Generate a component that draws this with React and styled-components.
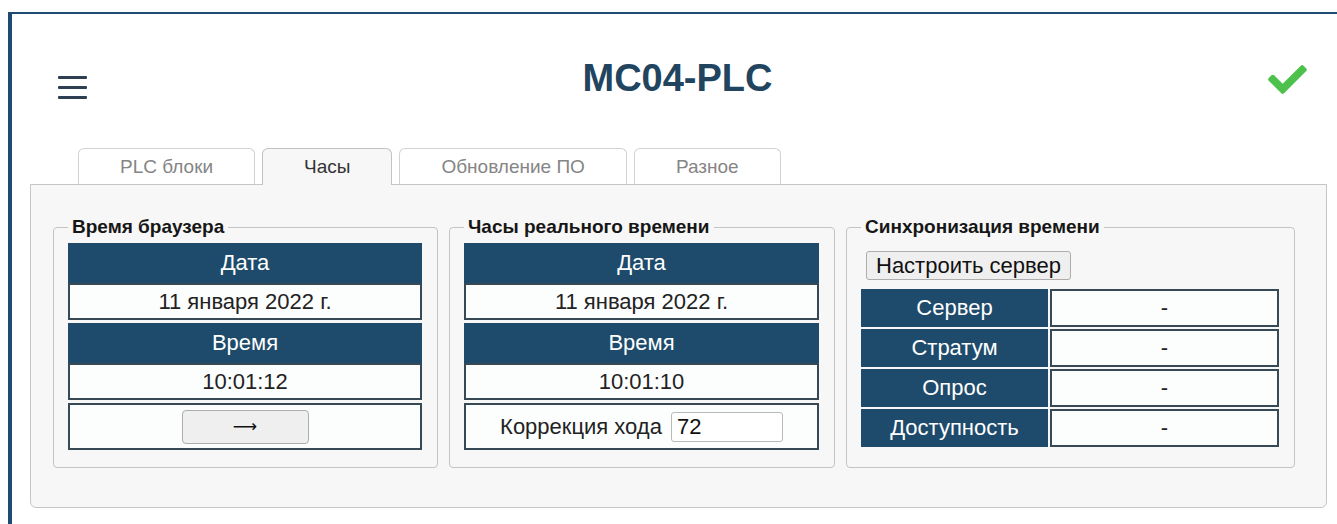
import React from "react";
import styled, { createGlobalStyle } from "styled-components";

const GlobalStyle = createGlobalStyle`
  html, body { margin: 0; padding: 0; background: #ffffff; }
  body { font-family: "Liberation Sans", Arial, sans-serif; color: #222; }
  * { box-sizing: border-box; }
`;

const Page = styled.div`
  height: 524px;
  padding: 12px 0 0 8px;
  overflow: hidden;
`;

const Frame = styled.div`
  height: 100%;
  border-top: 2px solid #1f4b72;
  border-left: 4px solid #1f4b72;
  background: #ffffff;
`;

const Header = styled.header`
  height: 134px;
  padding: 42px 30px 0 46px;
  display: flex;
  align-items: flex-start;
  justify-content: space-between;
`;

const Burger = styled.button`
  margin-top: 20px;
  width: 29px;
  padding: 0;
  border: 0;
  background: none;
  display: flex;
  flex-direction: column;
  gap: 7px;
  cursor: pointer;
`;

const BurgerBar = styled.span`
  display: block;
  height: 3px;
  border-radius: 1px;
  background: #2d3f50;
`;

const Title = styled.h1`
  margin: 0;
  font-size: 38px;
  line-height: 44px;
  font-weight: bold;
  color: #21445f;
`;

const StatusIcon = styled.svg`
  margin-top: 9px;
  width: 39px;
  height: 29px;
  fill: #4cc14c;
`;

const Body = styled.div`
  margin: 0 10px 0 18px;
`;

const TabBar = styled.nav`
  position: relative;
  z-index: 1;
  height: 37px;
  padding-left: 48px;
  display: flex;
  align-items: flex-start;
  gap: 7px;
`;

const Tab = styled.div`
  height: ${(p) => (p.$active ? "37px" : "36px")};
  padding: 0 41px;
  display: flex;
  align-items: center;
  justify-content: center;
  padding-bottom: ${(p) => (p.$active ? "1px" : "0")};
  border: 1px solid ${(p) => (p.$active ? "#c2c2c2" : "#d2d2d2")};
  border-bottom: 0;
  border-radius: 6px 6px 0 0;
  background: ${(p) => (p.$active ? "#f7f7f7" : "#ffffff")};
  color: ${(p) => (p.$active ? "#333333" : "#858585")};
  font-size: 19px;
  white-space: nowrap;
`;

const Panel = styled.section`
  margin-top: -1px;
  height: 324px;
  padding: 31px 0 0 22px;
  border: 1px solid #c6c6c6;
  border-radius: 0 0 6px 6px;
  background: #f7f7f7;
`;

const Columns = styled.div`
  display: flex;
  align-items: stretch;
  gap: 11px;
`;

const Group = styled.fieldset`
  margin: 0;
  width: ${(p) => p.$width}px;
  min-width: 0;
  padding: 5px 15px 17px 14px;
  border: 1px solid #c4c4c4;
  border-radius: 4px;
`;

const Legend = styled.legend`
  padding: 0 4px;
  font-size: 19px;
  line-height: 22px;
  font-weight: bold;
  color: #161616;
`;

const Stack = styled.div`
  display: flex;
  flex-direction: column;
`;

const HeadCell = styled.div`
  height: ${(p) => p.$h || 40}px;
  display: flex;
  align-items: center;
  justify-content: center;
  background: #1e4b6b;
  color: #ffffff;
  font-size: 22px;
`;

const ValueCell = styled.div`
  height: ${(p) => p.$h || 37}px;
  margin-bottom: ${(p) => p.$gap ?? 3}px;
  display: flex;
  align-items: center;
  justify-content: center;
  border: 2px solid #374955;
  background: #fcfdfd;
  color: #222222;
  font-size: 22px;
  white-space: nowrap;
`;

const PlainButton = styled.button`
  height: ${(p) => p.$h}px;
  width: ${(p) => (p.$w ? `${p.$w}px` : "auto")};
  padding: 0 10px;
  border: 1px solid #adadad;
  border-radius: 4px;
  background: #efefef;
  color: #111111;
  font-family: "Liberation Sans", Arial, sans-serif;
  font-size: 22px;
  cursor: pointer;
`;

const ArrowButton = styled(PlainButton)`
  font-family: "DejaVu Sans", sans-serif;
  font-size: 17px;
  line-height: 1;
`;

const ServerButton = styled(PlainButton)`
  align-self: flex-start;
  margin: 8px 0 9px 5px;
  padding: 0 9px;
  border-radius: 3px;
`;

const NumberInput = styled.input`
  margin-left: 9px;
  width: 112px;
  height: 30px;
  padding: 0 5px;
  border: 1px solid #b9b9b9;
  border-radius: 3px;
  background: #ffffff;
  color: #111111;
  font-family: "Liberation Sans", Arial, sans-serif;
  font-size: 22px;
`;

const SyncGrid = styled.div`
  display: grid;
  grid-template-columns: 187px 1fr;
  grid-auto-rows: 38px;
  gap: 2px;
`;

const tabs = ["PLC блоки", "Часы", "Обновление ПО", "Разное"];

const syncRows = [
  ["Сервер", "-"],
  ["Стратум", "-"],
  ["Опрос", "-"],
  ["Доступность", "-"],
];

function ClockBlock({ date, time, children }) {
  return (
    <Stack>
      <HeadCell>Дата</HeadCell>
      <ValueCell>{date}</ValueCell>
      <HeadCell>Время</HeadCell>
      <ValueCell>{time}</ValueCell>
      <ValueCell $h={47} $gap={0}>
        {children}
      </ValueCell>
    </Stack>
  );
}

export default function App() {
  return (
    <>
      <GlobalStyle />
      <Page>
        <Frame>
          <Header>
            <Burger aria-label="Меню">
              <BurgerBar />
              <BurgerBar />
              <BurgerBar />
            </Burger>
            <Title>MC04-PLC</Title>
            <StatusIcon viewBox="0 64 512 384">
              <path d="M173.9 439.4l-166.4-166.4c-10-10-10-26.2 0-36.2l36.2-36.2c10-10 26.2-10 36.2 0L192 312.7 432.1 72.6c10-10 26.2-10 36.2 0l36.2 36.2c10 10 10 26.2 0 36.2l-294.4 294.4c-10 10-26.2 10-36.2 0z" />
            </StatusIcon>
          </Header>
          <Body>
            <TabBar>
              {tabs.map((t) => (
                <Tab key={t} $active={t === "Часы"}>
                  {t}
                </Tab>
              ))}
            </TabBar>
            <Panel>
              <Columns>
                <Group $width={385}>
                  <Legend>Время браузера</Legend>
                  <ClockBlock date="11 января 2022 г." time="10:01:12">
                    <ArrowButton $h={34} $w={127}>⟶</ArrowButton>
                  </ClockBlock>
                </Group>
                <Group $width={386}>
                  <Legend>Часы реального времени</Legend>
                  <ClockBlock date="11 января 2022 г." time="10:01:10">
                    Коррекция хода
                    <NumberInput defaultValue="72" />
                  </ClockBlock>
                </Group>
                <Group $width={449}>
                  <Legend>Синхронизация времени</Legend>
                  <Stack>
                    <ServerButton $h={29}>Настроить сервер</ServerButton>
                    <SyncGrid>
                      {syncRows.map(([k, v]) => (
                        <React.Fragment key={k}>
                          <HeadCell $h={38}>{k}</HeadCell>
                          <ValueCell $h={38} $gap={0}>{v}</ValueCell>
                        </React.Fragment>
                      ))}
                    </SyncGrid>
                  </Stack>
                </Group>
              </Columns>
            </Panel>
          </Body>
        </Frame>
      </Page>
    </>
  );
}
